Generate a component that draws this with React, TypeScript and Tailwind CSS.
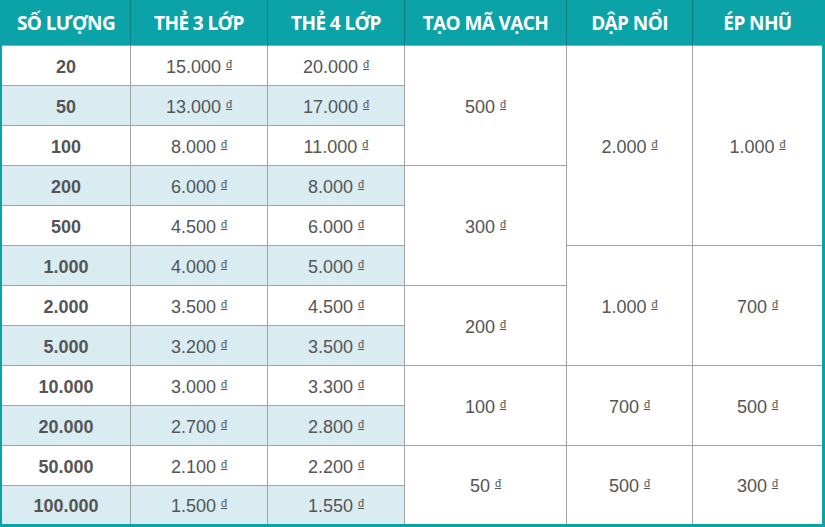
import React from "react";

type Cell = { text: string; span: number };

const QTY = ["20", "50", "100", "200", "500", "1.000", "2.000", "5.000", "10.000", "20.000", "50.000", "100.000"];
const LAYER3 = ["15.000", "13.000", "8.000", "6.000", "4.500", "4.000", "3.500", "3.200", "3.000", "2.700", "2.100", "1.500"];
const LAYER4 = ["20.000", "17.000", "11.000", "8.000", "6.000", "5.000", "4.500", "3.500", "3.300", "2.800", "2.200", "1.550"];

const BARCODE: Cell[] = [
  { text: "500", span: 3 },
  { text: "300", span: 3 },
  { text: "200", span: 2 },
  { text: "100", span: 2 },
  { text: "50", span: 2 },
];
const EMBOSS: Cell[] = [
  { text: "2.000", span: 5 },
  { text: "1.000", span: 3 },
  { text: "700", span: 2 },
  { text: "500", span: 2 },
];
const FOIL: Cell[] = [
  { text: "1.000", span: 5 },
  { text: "700", span: 3 },
  { text: "500", span: 2 },
  { text: "300", span: 2 },
];

// row index -> cell starting there
function startsAt(cells: Cell[]) {
  const map = new Map<number, Cell>();
  let i = 0;
  for (const c of cells) {
    map.set(i, c);
    i += c.span;
  }
  return map;
}

const barcodeAt = startsAt(BARCODE);
const embossAt = startsAt(EMBOSS);
const foilAt = startsAt(FOIL);

function Price({ value }: { value: string }) {
  return (
    <>
      {value}{" "}
      <span className="inline-block text-[11px] leading-none underline underline-offset-1 align-[5px]">đ</span>
    </>
  );
}

const HEAD = ["SỐ LƯỢNG", "THẺ 3 LỚP", "THẺ 4 LỚP", "TẠO MÃ VẠCH", "DẬP NỔI", "ÉP NHŨ"];

export default function App() {
  const last = QTY.length - 1;
  const cell =
    "border-[#a3a3a3] text-center align-middle p-0 pt-[2px] leading-[24px] font-['Liberation_Sans',Arial,sans-serif]";

  return (
    <div className="w-[825px] h-[527px] overflow-hidden bg-white">
      <div className="border-l-2 border-r-[3px] border-b-[3px] border-[#0ba3a8]">
        <table className="w-full table-fixed border-separate border-spacing-0 text-[18px] text-[#555] font-['Liberation_Sans',Arial,sans-serif]">
          <colgroup>
            <col className="w-[129px]" />
            <col className="w-[137px]" />
            <col className="w-[137px]" />
            <col className="w-[162px]" />
            <col className="w-[126px]" />
            <col />
          </colgroup>
          <thead>
            <tr className="h-[46px] bg-[#0ba3a8]">
              {HEAD.map((h, i) => (
                <th
                  key={h}
                  className={`p-0 pt-[1px] border-b border-[#a3a3a3] text-white text-[19px] font-bold tracking-[-0.6px] font-['Open_Sans',sans-serif] ${
                    i < HEAD.length - 1 ? "border-r border-r-[#0b7d82]" : ""
                  }`}
                >
                  {h}
                </th>
              ))}
            </tr>
          </thead>
          <tbody>
            {QTY.map((q, r) => {
              const shaded = r % 2 === 1 ? "bg-[#d9ecf2]" : "bg-white";
              const bottom = r === last ? "" : "border-b";
              const b = barcodeAt.get(r);
              const e = embossAt.get(r);
              const f = foilAt.get(r);
              const spanBottom = (c: Cell) => (r + c.span - 1 === last ? "" : "border-b");
              return (
                <tr key={q} className={r === last ? "h-[38px]" : "h-[40px]"}>
                  <td className={`${cell} ${shaded} ${bottom} border-r font-bold`}>{q}</td>
                  <td className={`${cell} ${shaded} ${bottom} border-r`}>
                    <Price value={LAYER3[r]} />
                  </td>
                  <td className={`${cell} ${shaded} ${bottom} border-r`}>
                    <Price value={LAYER4[r]} />
                  </td>
                  {b && (
                    <td rowSpan={b.span} className={`${cell} ${spanBottom(b)} border-r`}>
                      <Price value={b.text} />
                    </td>
                  )}
                  {e && (
                    <td rowSpan={e.span} className={`${cell} ${spanBottom(e)} border-r`}>
                      <Price value={e.text} />
                    </td>
                  )}
                  {f && (
                    <td rowSpan={f.span} className={`${cell} ${spanBottom(f)}`}>
                      <Price value={f.text} />
                    </td>
                  )}
                </tr>
              );
            })}
          </tbody>
        </table>
      </div>
    </div>
  );
}
